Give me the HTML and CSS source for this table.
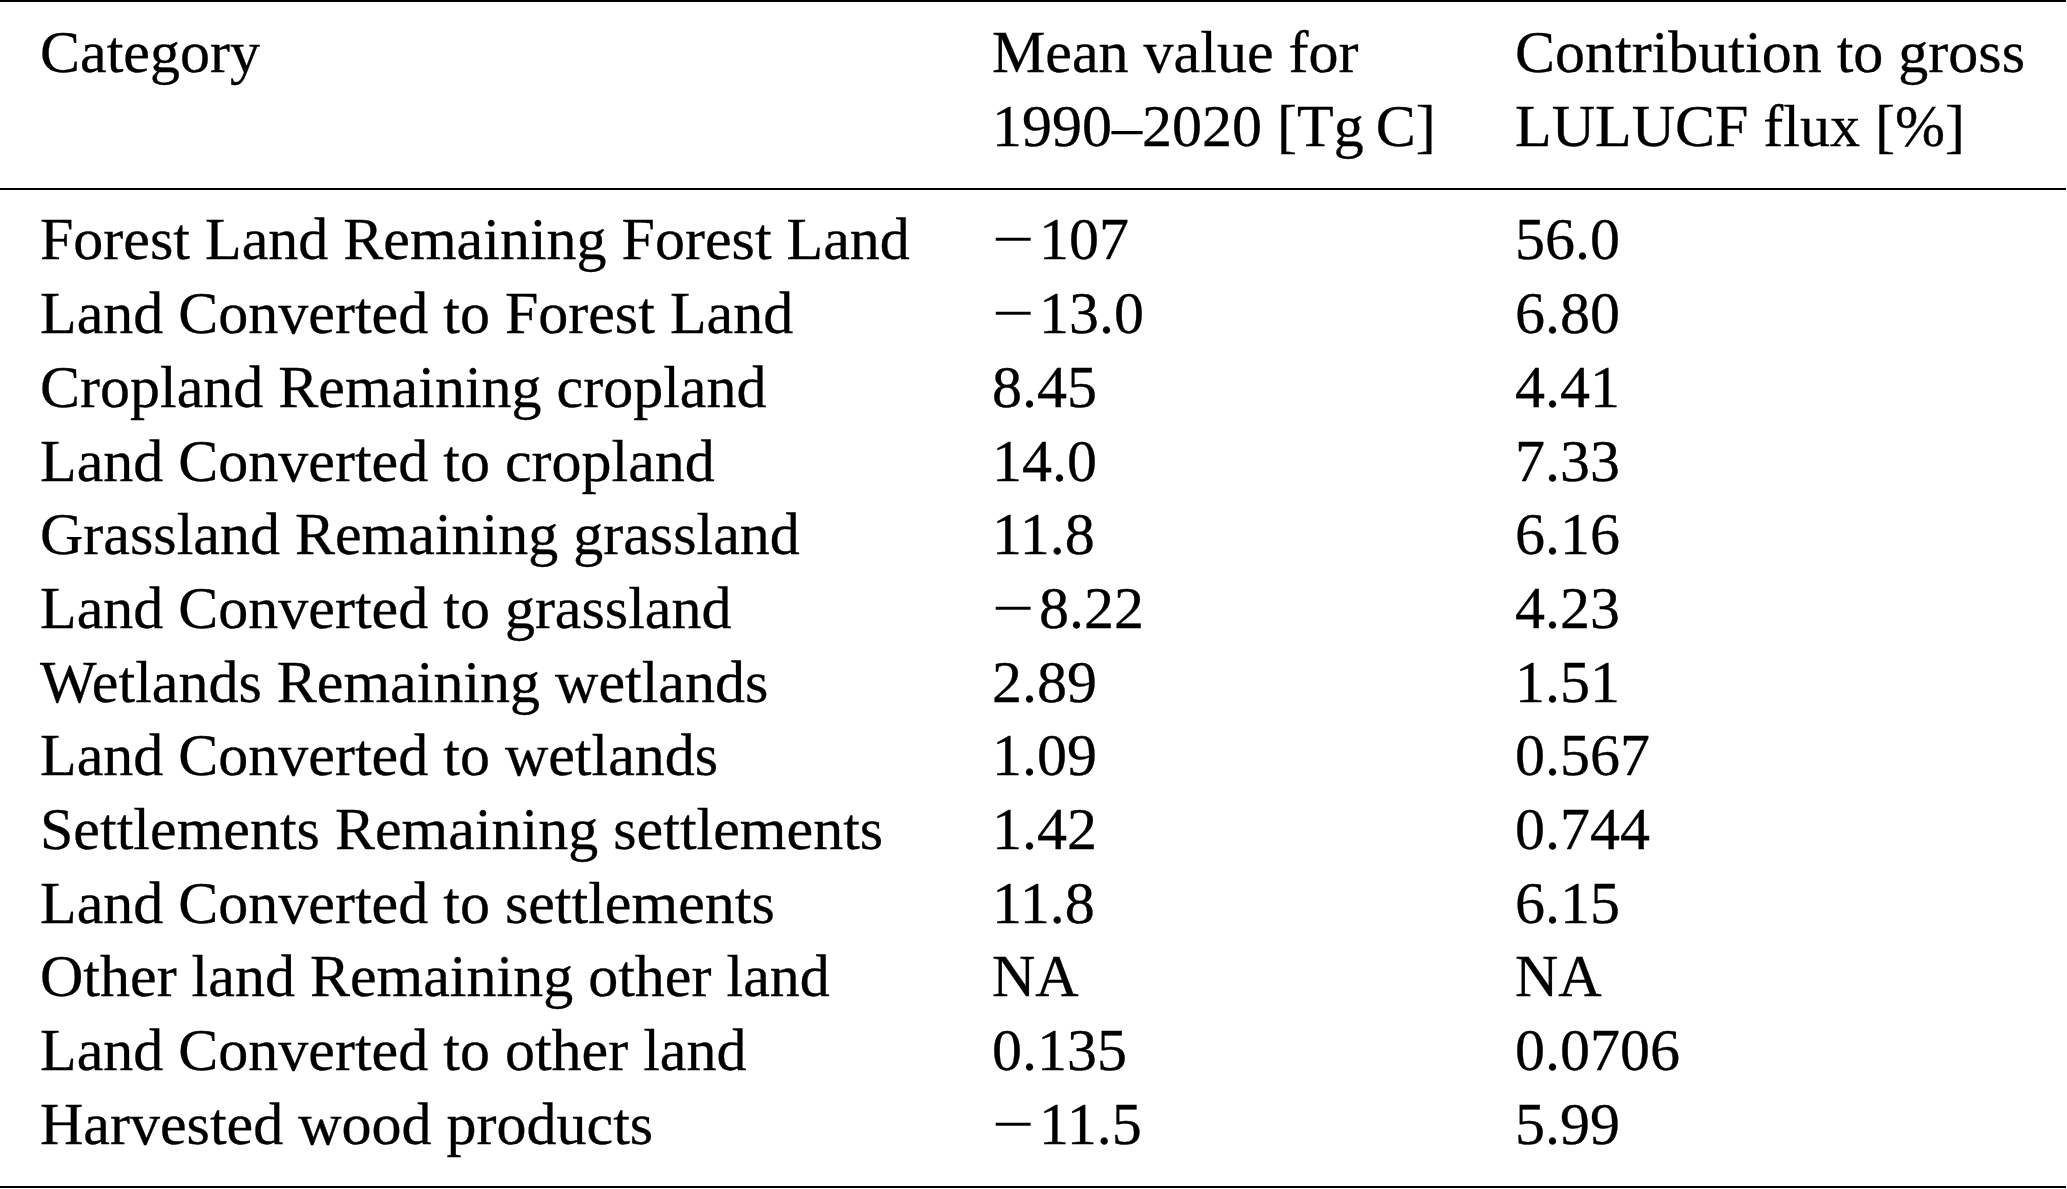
FILE: index.html
```html
<!DOCTYPE html>
<html lang="en">
<head>
<meta charset="utf-8">
<title>LULUCF categories</title>
<link rel="stylesheet" href="styles.css">
</head>
<body>
<div class="tbl">
  <div class="grid head">
    <div class="cell">Category</div>
    <div class="cell">Mean value for<br>1990–2020 [Tg&#8201;C]</div>
    <div class="cell">Contribution to gross<br>LULUCF flux [%]</div>
  </div>
  <div class="grid body">
    <div class="cell">Forest Land Remaining Forest Land</div><div class="cell"><span class="neg">&#8722;</span>107</div><div class="cell">56.0</div>
    <div class="cell">Land Converted to Forest Land</div><div class="cell"><span class="neg">&#8722;</span>13.0</div><div class="cell">6.80</div>
    <div class="cell">Cropland Remaining cropland</div><div class="cell">8.45</div><div class="cell">4.41</div>
    <div class="cell">Land Converted to cropland</div><div class="cell">14.0</div><div class="cell">7.33</div>
    <div class="cell">Grassland Remaining grassland</div><div class="cell">11.8</div><div class="cell">6.16</div>
    <div class="cell">Land Converted to grassland</div><div class="cell"><span class="neg">&#8722;</span>8.22</div><div class="cell">4.23</div>
    <div class="cell">Wetlands Remaining wetlands</div><div class="cell">2.89</div><div class="cell">1.51</div>
    <div class="cell">Land Converted to wetlands</div><div class="cell">1.09</div><div class="cell">0.567</div>
    <div class="cell">Settlements Remaining settlements</div><div class="cell">1.42</div><div class="cell">0.744</div>
    <div class="cell">Land Converted to settlements</div><div class="cell">11.8</div><div class="cell">6.15</div>
    <div class="cell">Other land Remaining other land</div><div class="cell">NA</div><div class="cell">NA</div>
    <div class="cell">Land Converted to other land</div><div class="cell">0.135</div><div class="cell">0.0706</div>
    <div class="cell">Harvested wood products</div><div class="cell"><span class="neg">&#8722;</span>11.5</div><div class="cell">5.99</div>
  </div>
</div>
</body>
</html>
```
FILE: styles.css
```css
html, body {
  margin: 0;
  padding: 0;
  background: #ffffff;
}
body {
  font-family: "Liberation Serif", "Times New Roman", serif;
  font-size: 60px;
  line-height: 73.7px;
  color: #000000;
  -webkit-text-stroke: 0.3px #000000;
}
.tbl {
  width: 2066px;
  border-top: 2px solid #000;
  border-bottom: 2px solid #000;
}
.grid {
  display: grid;
  grid-template-columns: 952px 523px 1fr;
  padding-left: 40px;
}
.head {
  padding-top: 14px;
  padding-bottom: 25px;
  border-bottom: 2px solid #000;
}
.body {
  padding-top: 13px;
  padding-bottom: 24px;
}
.cell {
  white-space: nowrap;
}
.neg {
  display: inline-block;
  width: 47px;
  transform: scaleX(1.25);
  transform-origin: left center;
  -webkit-text-stroke: 0;
}
```
